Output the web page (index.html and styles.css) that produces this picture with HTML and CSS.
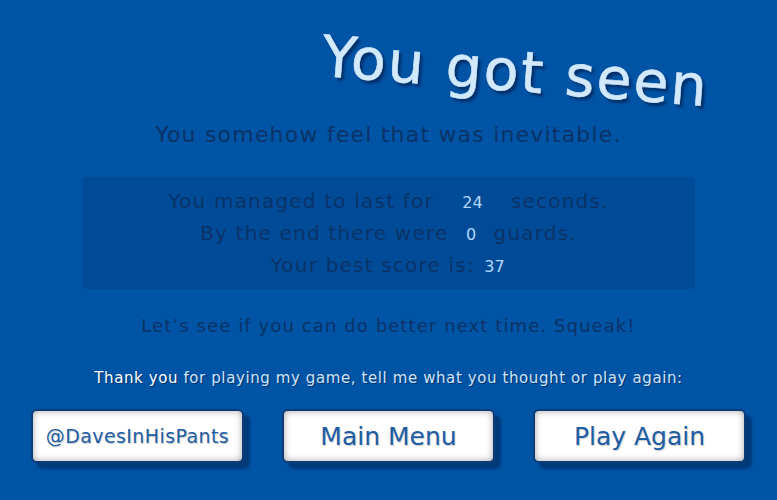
FILE: index.html
```html
<!DOCTYPE html>
<html lang="en">
<head>
  <meta charset="UTF-8">
  <meta name="viewport" content="width=device-width, initial-scale=1.0">
  <title>Game Over</title>
  <link rel="stylesheet" href="styles.css">
</head>
<body>

  <!-- Game Over Screen -->
  <div class="screen">
    <h1 class="title">You got seen</h1>
    <p class="tagline">You somehow feel that was inevitable.</p>

    <div class="stats">
      <p>You managed to last for <span class="num wide">24</span> seconds.</p>
      <p>By the end there were <span class="num">0</span> guards.</p>
      <p>Your best score is: <span class="num tight">37</span></p>
    </div>

    <p class="taunt">Let’s see if you can do better next time. Squeak!</p>
    <p class="thanks"><strong>Thank you</strong> for playing my game, tell me what you thought or play again:</p>

    <div class="actions">
      <button class="btn btn-small">@DavesInHisPants</button>
      <button class="btn">Main Menu</button>
      <button class="btn">Play Again</button>
    </div>
  </div>

</body>
</html>
```

FILE: styles.css
```css
/* Basic Reset */
* {
  margin: 0;
  padding: 0;
  box-sizing: border-box;
}

body {
  width: 777px;
  height: 500px;
  overflow: hidden;
  background-color: #0054a6;
  font-family: 'DejaVu Sans', sans-serif;
}

.screen {
  display: flex;
  flex-direction: column;
  align-items: center;
  padding-top: 38px;
}

/* Title */
.title {
  font-size: 57px;
  font-weight: normal;
  color: #d2e8fb;
  text-shadow: 3px 3px 3px rgba(0, 20, 60, 0.6);
  transform: translateX(126px) rotate(4.5deg);
  letter-spacing: 2px;
  -webkit-text-stroke: 0.6px #d2e8fb;
  height: 78px;
}

/* Subtitle */
.tagline {
  margin-top: 6px;
  font-size: 22px;
  letter-spacing: 1.2px;
  color: #0b3367;
}

/* Stats panel */
.stats {
  width: 613px;
  margin-top: 30px;
  padding: 8px 0 6px;
  background-color: #004b98;
  border: 1px dotted #0a4a8e;
  border-radius: 4px;
  text-align: center;
  font-size: 20px;
  letter-spacing: 1.2px;
  line-height: 31px;
  color: #0b3367;
}

.num {
  display: inline-block;
  min-width: 30px;
  text-align: center;
  font-size: 16px;
  letter-spacing: 0;
  color: #b4d7fb;
}

.num.wide {
  min-width: 62px;
}

.num.tight {
  min-width: 24px;
}

/* Closing lines */
.taunt {
  margin-top: 26px;
  font-size: 18px;
  letter-spacing: 1.1px;
  color: #0b3367;
}

.thanks {
  margin-top: 33px;
  font-size: 15px;
  letter-spacing: 0.6px;
  color: #cfe4fa;
  text-shadow: 1px 1px 1px rgba(0, 20, 60, 0.5);
}

.thanks strong {
  font-weight: normal;
  color: #fff;
}

/* Buttons */
.actions {
  display: flex;
  gap: 38px;
  margin-top: 22px;
}

.btn {
  width: 213px;
  height: 54px;
  background-color: #fff;
  border: 2px solid #0b3c78;
  border-radius: 6px;
  box-shadow: inset 0 0 7px rgba(0, 0, 0, 0.35), 6px 6px 3px #003a79;
  font-family: 'DejaVu Sans', sans-serif;
  font-size: 25px;
  color: #1d5da4;
  text-shadow: 1px 1px 1px rgba(0, 0, 0, 0.2);
  cursor: pointer;
}

.btn-small {
  font-size: 19px;
  letter-spacing: 0.4px;
}
```
